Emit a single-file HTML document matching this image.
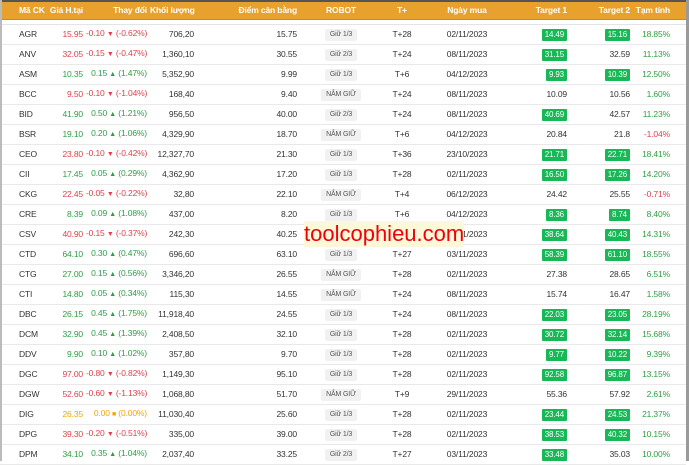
<!DOCTYPE html>
<html><head><meta charset="utf-8">
<style>
*{margin:0;padding:0;box-sizing:border-box}
body{width:689px;height:461px;overflow:hidden;background:#fff;font-family:"Liberation Sans",Arial,sans-serif;font-size:8.5px;color:#333;position:relative;letter-spacing:-0.15px}
.top{position:absolute;left:0;top:0;width:689px;height:2px;background:#555}
.rb{position:absolute;right:0;top:0;width:3px;height:461px;background:#9a9a9a}
.lb{position:absolute;left:0;top:0;width:2px;height:461px;background:#bbb}
table{position:absolute;left:0;top:2px;width:686px;border-collapse:collapse;table-layout:fixed}
th{background:#e8a12c;color:#fff;font-weight:bold;height:17px;line-height:16px;padding:0;font-size:8.5px;border-bottom:1px solid #d08a1a;white-space:nowrap;overflow:visible}
td{height:20px;line-height:16px;padding:0;border-bottom:1px solid #e9e9e9;white-space:nowrap;overflow:visible;vertical-align:middle}
tr.sp td{height:5px;line-height:3px;border-bottom:1px solid #e4e4e4}
.l{text-align:left;padding-left:19px}
.r{text-align:right;padding-right:3px}
.c{text-align:center}
.red{color:#e0414b}.grn{color:#2e9e45}.yel{color:#f0a800}
.a{font-size:7px}
.b{display:inline-block;background:#17b856;color:#fff;padding:0 3px;height:12px;line-height:12px;border-radius:1px;font-size:8px;vertical-align:middle}
.t{display:inline-block;background:#f1f1f1;color:#555;padding:0 5px;height:12px;line-height:12px;font-size:7px;border-radius:2px;vertical-align:middle}
.wm{position:absolute;left:304px;top:221px;width:160px;height:26px;background:#fdf8d8;color:#f0000a;font-size:22px;line-height:26px;text-align:center;letter-spacing:0}
</style></head><body>
<div class="top"></div>
<table>
<colgroup><col style="width:45px"><col style="width:41px"><col style="width:64px"><col style="width:47px"><col style="width:103px"><col style="width:82px"><col style="width:40px"><col style="width:90px"><col style="width:58px"><col style="width:63px"><col style="width:40px"><col style="width:13px"></colgroup>
<tr><th class="l">Mã CK</th><th class="r">Giá H.tại</th><th class="r">Thay đổi</th><th class="r">Khối lượng</th><th class="r">Điểm cân bằng</th><th class="c">ROBOT</th><th class="c">T+</th><th class="c">Ngày mua</th><th class="r">Target 1</th><th class="r">Target 2</th><th class="r">Tạm tính</th><th></th></tr>
<tr class="sp"><td colspan="12"></td></tr>
<tr><td class="l">AGR</td><td class="r red">15.95</td><td class="r red">-0.10 <span class="a">▼</span> (-0.62%)</td><td class="r">706,20</td><td class="r">15.75</td><td class="c"><span class="t">Giữ 1/3</span></td><td class="c">T+28</td><td class="c">02/11/2023</td><td class="r"><span class="b">14.49</span></td><td class="r"><span class="b">15.16</span></td><td class="r grn">18.85%</td><td></td></tr>
<tr><td class="l">ANV</td><td class="r red">32.05</td><td class="r red">-0.15 <span class="a">▼</span> (-0.47%)</td><td class="r">1,360,10</td><td class="r">30.55</td><td class="c"><span class="t">Giữ 2/3</span></td><td class="c">T+24</td><td class="c">08/11/2023</td><td class="r"><span class="b">31.15</span></td><td class="r">32.59</td><td class="r grn">11.13%</td><td></td></tr>
<tr><td class="l">ASM</td><td class="r grn">10.35</td><td class="r grn">0.15 <span class="a">▲</span> (1.47%)</td><td class="r">5,352,90</td><td class="r">9.99</td><td class="c"><span class="t">Giữ 1/3</span></td><td class="c">T+6</td><td class="c">04/12/2023</td><td class="r"><span class="b">9.93</span></td><td class="r"><span class="b">10.39</span></td><td class="r grn">12.50%</td><td></td></tr>
<tr><td class="l">BCC</td><td class="r red">9.50</td><td class="r red">-0.10 <span class="a">▼</span> (-1.04%)</td><td class="r">168,40</td><td class="r">9.40</td><td class="c"><span class="t">NẮM GIỮ</span></td><td class="c">T+24</td><td class="c">08/11/2023</td><td class="r">10.09</td><td class="r">10.56</td><td class="r grn">1.60%</td><td></td></tr>
<tr><td class="l">BID</td><td class="r grn">41.90</td><td class="r grn">0.50 <span class="a">▲</span> (1.21%)</td><td class="r">956,50</td><td class="r">40.00</td><td class="c"><span class="t">Giữ 2/3</span></td><td class="c">T+24</td><td class="c">08/11/2023</td><td class="r"><span class="b">40.69</span></td><td class="r">42.57</td><td class="r grn">11.23%</td><td></td></tr>
<tr><td class="l">BSR</td><td class="r grn">19.10</td><td class="r grn">0.20 <span class="a">▲</span> (1.06%)</td><td class="r">4,329,90</td><td class="r">18.70</td><td class="c"><span class="t">NẮM GIỮ</span></td><td class="c">T+6</td><td class="c">04/12/2023</td><td class="r">20.84</td><td class="r">21.8</td><td class="r red">-1.04%</td><td></td></tr>
<tr><td class="l">CEO</td><td class="r red">23.80</td><td class="r red">-0.10 <span class="a">▼</span> (-0.42%)</td><td class="r">12,327,70</td><td class="r">21.30</td><td class="c"><span class="t">Giữ 1/3</span></td><td class="c">T+36</td><td class="c">23/10/2023</td><td class="r"><span class="b">21.71</span></td><td class="r"><span class="b">22.71</span></td><td class="r grn">18.41%</td><td></td></tr>
<tr><td class="l">CII</td><td class="r grn">17.45</td><td class="r grn">0.05 <span class="a">▲</span> (0.29%)</td><td class="r">4,362,90</td><td class="r">17.20</td><td class="c"><span class="t">Giữ 1/3</span></td><td class="c">T+28</td><td class="c">02/11/2023</td><td class="r"><span class="b">16.50</span></td><td class="r"><span class="b">17.26</span></td><td class="r grn">14.20%</td><td></td></tr>
<tr><td class="l">CKG</td><td class="r red">22.45</td><td class="r red">-0.05 <span class="a">▼</span> (-0.22%)</td><td class="r">32,80</td><td class="r">22.10</td><td class="c"><span class="t">NẮM GIỮ</span></td><td class="c">T+4</td><td class="c">06/12/2023</td><td class="r">24.42</td><td class="r">25.55</td><td class="r red">-0.71%</td><td></td></tr>
<tr><td class="l">CRE</td><td class="r grn">8.39</td><td class="r grn">0.09 <span class="a">▲</span> (1.08%)</td><td class="r">437,00</td><td class="r">8.20</td><td class="c"><span class="t">Giữ 1/3</span></td><td class="c">T+6</td><td class="c">04/12/2023</td><td class="r"><span class="b">8.36</span></td><td class="r"><span class="b">8.74</span></td><td class="r grn">8.40%</td><td></td></tr>
<tr><td class="l">CSV</td><td class="r red">40.90</td><td class="r red">-0.15 <span class="a">▼</span> (-0.37%)</td><td class="r">242,30</td><td class="r">40.25</td><td class="c"><span class="t">Giữ 1/3</span></td><td class="c">T+28</td><td class="c">02/11/2023</td><td class="r"><span class="b">38.64</span></td><td class="r"><span class="b">40.43</span></td><td class="r grn">14.31%</td><td></td></tr>
<tr><td class="l">CTD</td><td class="r grn">64.10</td><td class="r grn">0.30 <span class="a">▲</span> (0.47%)</td><td class="r">696,60</td><td class="r">63.10</td><td class="c"><span class="t">Giữ 1/3</span></td><td class="c">T+27</td><td class="c">03/11/2023</td><td class="r"><span class="b">58.39</span></td><td class="r"><span class="b">61.10</span></td><td class="r grn">18.55%</td><td></td></tr>
<tr><td class="l">CTG</td><td class="r grn">27.00</td><td class="r grn">0.15 <span class="a">▲</span> (0.56%)</td><td class="r">3,346,20</td><td class="r">26.55</td><td class="c"><span class="t">NẮM GIỮ</span></td><td class="c">T+28</td><td class="c">02/11/2023</td><td class="r">27.38</td><td class="r">28.65</td><td class="r grn">6.51%</td><td></td></tr>
<tr><td class="l">CTI</td><td class="r grn">14.80</td><td class="r grn">0.05 <span class="a">▲</span> (0.34%)</td><td class="r">115,30</td><td class="r">14.55</td><td class="c"><span class="t">NẮM GIỮ</span></td><td class="c">T+24</td><td class="c">08/11/2023</td><td class="r">15.74</td><td class="r">16.47</td><td class="r grn">1.58%</td><td></td></tr>
<tr><td class="l">DBC</td><td class="r grn">26.15</td><td class="r grn">0.45 <span class="a">▲</span> (1.75%)</td><td class="r">11,918,40</td><td class="r">24.55</td><td class="c"><span class="t">Giữ 1/3</span></td><td class="c">T+24</td><td class="c">08/11/2023</td><td class="r"><span class="b">22.03</span></td><td class="r"><span class="b">23.05</span></td><td class="r grn">28.19%</td><td></td></tr>
<tr><td class="l">DCM</td><td class="r grn">32.90</td><td class="r grn">0.45 <span class="a">▲</span> (1.39%)</td><td class="r">2,408,50</td><td class="r">32.10</td><td class="c"><span class="t">Giữ 1/3</span></td><td class="c">T+28</td><td class="c">02/11/2023</td><td class="r"><span class="b">30.72</span></td><td class="r"><span class="b">32.14</span></td><td class="r grn">15.68%</td><td></td></tr>
<tr><td class="l">DDV</td><td class="r grn">9.90</td><td class="r grn">0.10 <span class="a">▲</span> (1.02%)</td><td class="r">357,80</td><td class="r">9.70</td><td class="c"><span class="t">Giữ 1/3</span></td><td class="c">T+28</td><td class="c">02/11/2023</td><td class="r"><span class="b">9.77</span></td><td class="r"><span class="b">10.22</span></td><td class="r grn">9.39%</td><td></td></tr>
<tr><td class="l">DGC</td><td class="r red">97.00</td><td class="r red">-0.80 <span class="a">▼</span> (-0.82%)</td><td class="r">1,149,30</td><td class="r">95.10</td><td class="c"><span class="t">Giữ 1/3</span></td><td class="c">T+28</td><td class="c">02/11/2023</td><td class="r"><span class="b">92.58</span></td><td class="r"><span class="b">96.87</span></td><td class="r grn">13.15%</td><td></td></tr>
<tr><td class="l">DGW</td><td class="r red">52.60</td><td class="r red">-0.60 <span class="a">▼</span> (-1.13%)</td><td class="r">1,068,80</td><td class="r">51.70</td><td class="c"><span class="t">NẮM GIỮ</span></td><td class="c">T+9</td><td class="c">29/11/2023</td><td class="r">55.36</td><td class="r">57.92</td><td class="r grn">2.61%</td><td></td></tr>
<tr><td class="l">DIG</td><td class="r yel">26.35</td><td class="r yel">0.00 <span class="a">■</span> (0.00%)</td><td class="r">11,030,40</td><td class="r">25.60</td><td class="c"><span class="t">Giữ 1/3</span></td><td class="c">T+28</td><td class="c">02/11/2023</td><td class="r"><span class="b">23.44</span></td><td class="r"><span class="b">24.53</span></td><td class="r grn">21.37%</td><td></td></tr>
<tr><td class="l">DPG</td><td class="r red">39.30</td><td class="r red">-0.20 <span class="a">▼</span> (-0.51%)</td><td class="r">335,00</td><td class="r">39.00</td><td class="c"><span class="t">Giữ 1/3</span></td><td class="c">T+28</td><td class="c">02/11/2023</td><td class="r"><span class="b">38.53</span></td><td class="r"><span class="b">40.32</span></td><td class="r grn">10.15%</td><td></td></tr>
<tr><td class="l">DPM</td><td class="r grn">34.10</td><td class="r grn">0.35 <span class="a">▲</span> (1.04%)</td><td class="r">2,037,40</td><td class="r">33.25</td><td class="c"><span class="t">Giữ 2/3</span></td><td class="c">T+27</td><td class="c">03/11/2023</td><td class="r"><span class="b">33.48</span></td><td class="r">35.03</td><td class="r grn">10.00%</td><td></td></tr>
</table>
<div class="wm">toolcophieu.com</div>
<div class="lb"></div>
<div class="rb"></div>
</body></html>
